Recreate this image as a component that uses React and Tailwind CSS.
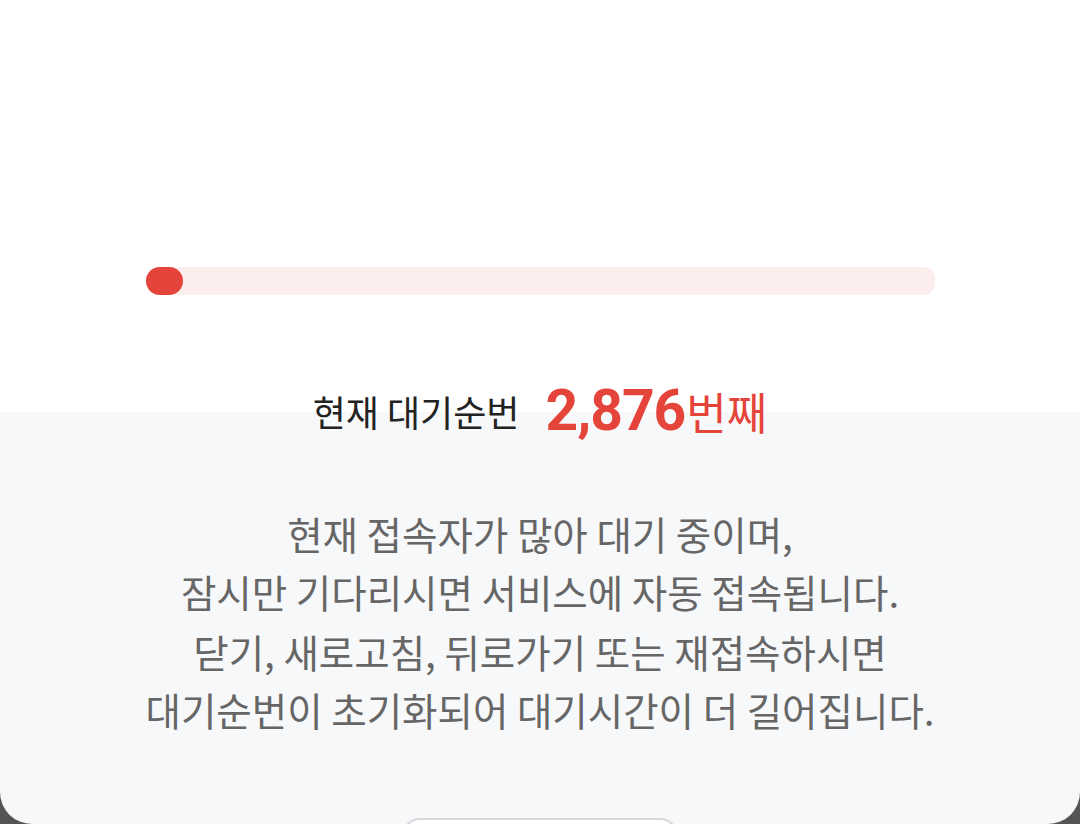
export default function App() {
  const position = 2876;
  const progress = 0;

  return (
    <div className="h-[824px] w-[1080px] overflow-hidden bg-[#545454]">
      <div
        className="flex h-[824px] flex-col items-center overflow-hidden rounded-b-[32px] bg-[linear-gradient(to_bottom,#ffffff_412px,#f7f8fa_412px)]"
        style={{ fontFamily: '"Noto Sans CJK KR", "Noto Sans", sans-serif' }}
      >
        {/* queue progress */}
        <div className="mt-[267px] h-[28px] w-[789px] rounded-[12px] bg-[#fdeeee]">
          <div
            className="h-[28px] min-w-[37px] rounded-full bg-[#e5443a]"
            style={{ width: `${progress}%` }}
          />
        </div>

        {/* current position */}
        <div className="mt-[87px] flex h-[60px] items-center">
          <span className="text-[36px] leading-none text-[#222222]">현재 대기순번</span>
          <span className="ml-[26px] flex items-baseline leading-none text-[#e5443a]">
            <span
              className="text-[57px] font-bold tracking-[-1px]"
              style={{ fontFamily: 'Roboto, "Noto Sans CJK KR", sans-serif' }}
            >
              {position.toLocaleString('en-US')}
            </span>
            <span className="ml-[1px] text-[44px]">번째</span>
          </span>
        </div>

        {/* notice */}
        <div className="mt-[65px] text-center text-[38.5px] leading-[58px] text-[#666666]">
          <p>
            현재 접속자가 많아 대기 중이며,
            <br />
            잠시만 기다리시면 서비스에 자동 접속됩니다.
          </p>
          <p className="mt-[2px]">
            닫기, 새로고침, 뒤로가기 또는 재접속하시면
            <br />
            대기순번이 초기화되어 대기시간이 더 길어집니다.
          </p>
        </div>

        <button
          type="button"
          className="mt-[80px] h-[72px] w-[276px] shrink-0 rounded-[18px] border-2 border-[#d6d7da] bg-white"
        />
      </div>
    </div>
  );
}
